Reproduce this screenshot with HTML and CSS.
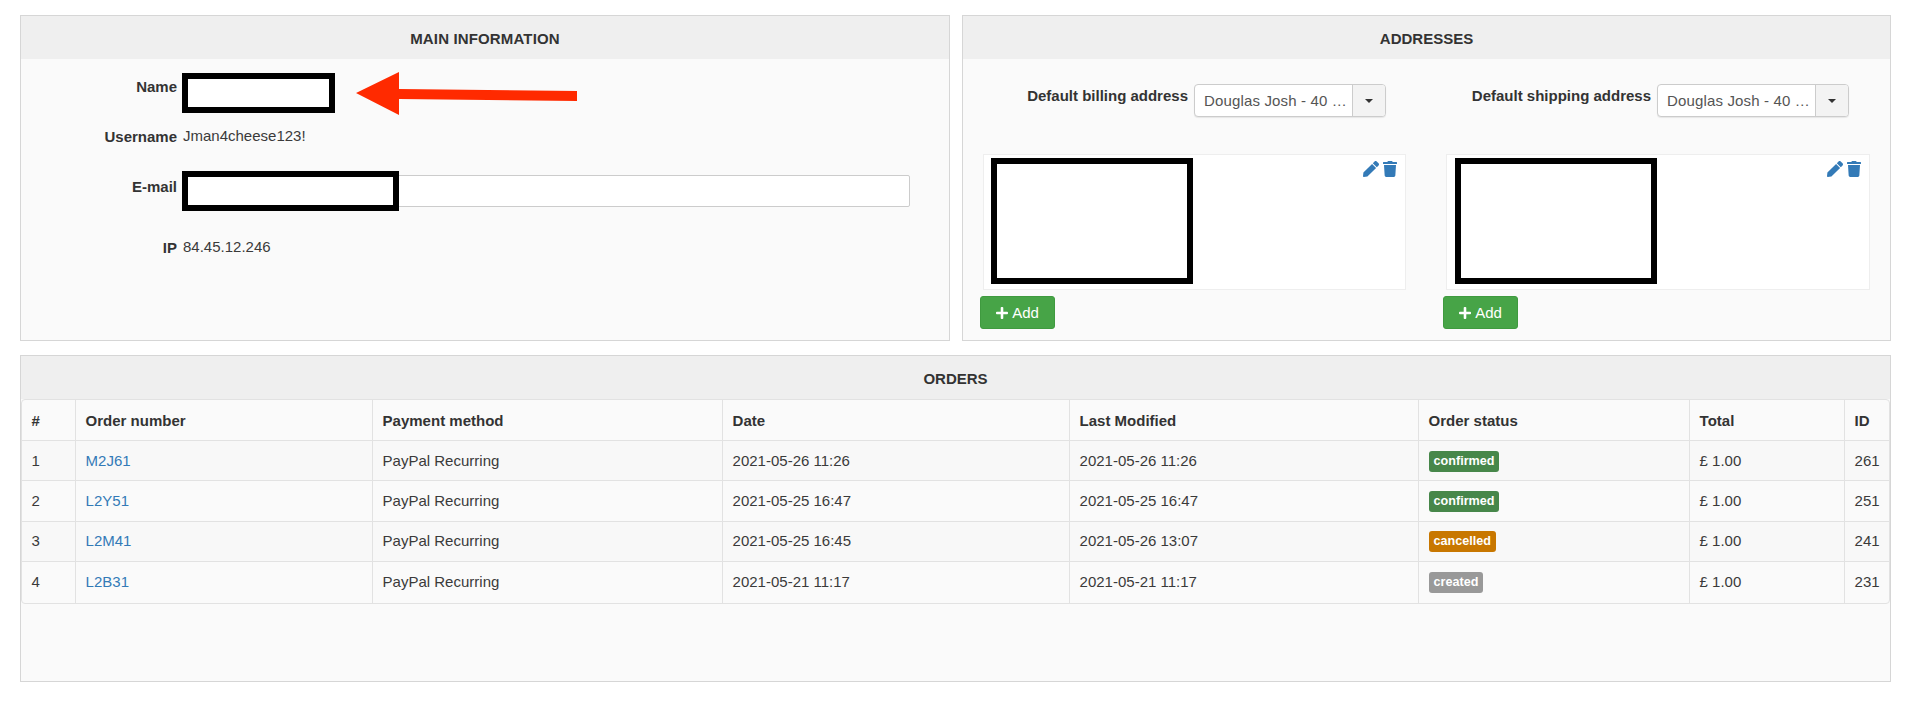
FILE: index.html
```html
<!DOCTYPE html>
<html lang="en">
<head>
<meta charset="utf-8">
<title>Customer</title>
<link rel="stylesheet" href="styles.css">
</head>
<body>
<main class="page">
  <div class="top-row">
    <section class="panel panel-main">
      <h2 class="panel-title">MAIN INFORMATION</h2>
      <div class="main-body">
        <div class="field field-name"><span class="label">Name</span><span class="redact redact-name"></span></div>
        <div class="field field-user"><span class="label">Username</span><span class="value">Jman4cheese123!</span></div>
        <div class="field field-mail"><span class="label">E-mail</span><div class="mail-input"><span class="redact redact-mail"></span></div></div>
        <div class="field field-ip"><span class="label">IP</span><span class="value">84.45.12.246</span></div>
      </div>
      <svg class="arrow" viewBox="0 0 221 43" aria-hidden="true"><path d="M0 21 43 0V17L221 19V29L43 27V43Z"/></svg>
    </section>
    <section class="panel panel-addr">
      <h2 class="panel-title">ADDRESSES</h2>
      <div class="addr-body">
        <div class="addr-col">
          <div class="addr-select-row">
            <span class="addr-label">Default billing address</span>
            <div class="select"><span class="select-text">Douglas Josh - 40 …</span><span class="select-caret"><i class="caret"></i></span></div>
          </div>
          <div class="addr-box">
            <span class="redact redact-addr"></span>
            <div class="addr-icons">
              <svg class="ico-pen" viewBox="0 0 512 512"><path d="M290.74 93.24l128.02 128.02-277.99 277.99-114.14 12.6C11.35 513.54-1.56 500.62.14 485.34l12.7-114.22 277.9-277.88zm207.2-19.06l-60.11-60.11c-18.75-18.75-49.16-18.75-67.91 0l-56.55 56.55 128.02 128.02 56.55-56.55c18.75-18.76 18.75-49.16 0-67.91z"/></svg>
              <svg class="ico-trash" viewBox="0 0 448 512"><path d="M432 32H312l-9.4-18.7A24 24 0 0 0 281.1 0H166.8a23.72 23.72 0 0 0-21.4 13.3L136 32H16A16 16 0 0 0 0 48v32a16 16 0 0 0 16 16h416a16 16 0 0 0 16-16V48a16 16 0 0 0-16-16zM53.2 467a48 48 0 0 0 47.9 45h245.8a48 48 0 0 0 47.9-45L416 128H32z"/></svg>
            </div>
          </div>
          <button class="btn-add" type="button"><svg class="ico-plus" viewBox="0 0 448 448"><path d="M416 176H272V32c0-17.67-14.33-32-32-32h-32c-17.67 0-32 14.33-32 32v144H32c-17.67 0-32 14.33-32 32v32c0 17.67 14.33 32 32 32h144v144c0 17.67 14.33 32 32 32h32c17.67 0 32-14.33 32-32V272h144c17.67 0 32-14.33 32-32v-32c0-17.67-14.33-32-32-32z"/></svg>Add</button>
        </div>
        <div class="addr-col">
          <div class="addr-select-row">
            <span class="addr-label">Default shipping address</span>
            <div class="select"><span class="select-text">Douglas Josh - 40 …</span><span class="select-caret"><i class="caret"></i></span></div>
          </div>
          <div class="addr-box">
            <span class="redact redact-addr"></span>
            <div class="addr-icons">
              <svg class="ico-pen" viewBox="0 0 512 512"><path d="M290.74 93.24l128.02 128.02-277.99 277.99-114.14 12.6C11.35 513.54-1.56 500.62.14 485.34l12.7-114.22 277.9-277.88zm207.2-19.06l-60.11-60.11c-18.75-18.75-49.16-18.75-67.91 0l-56.55 56.55 128.02 128.02 56.55-56.55c18.75-18.76 18.75-49.16 0-67.91z"/></svg>
              <svg class="ico-trash" viewBox="0 0 448 512"><path d="M432 32H312l-9.4-18.7A24 24 0 0 0 281.1 0H166.8a23.72 23.72 0 0 0-21.4 13.3L136 32H16A16 16 0 0 0 0 48v32a16 16 0 0 0 16 16h416a16 16 0 0 0 16-16V48a16 16 0 0 0-16-16zM53.2 467a48 48 0 0 0 47.9 45h245.8a48 48 0 0 0 47.9-45L416 128H32z"/></svg>
            </div>
          </div>
          <button class="btn-add" type="button"><svg class="ico-plus" viewBox="0 0 448 448"><path d="M416 176H272V32c0-17.67-14.33-32-32-32h-32c-17.67 0-32 14.33-32 32v144H32c-17.67 0-32 14.33-32 32v32c0 17.67 14.33 32 32 32h144v144c0 17.67 14.33 32 32 32h32c17.67 0 32-14.33 32-32V272h144c17.67 0 32-14.33 32-32v-32c0-17.67-14.33-32-32-32z"/></svg>Add</button>
        </div>
      </div>
    </section>
  </div>
  <section class="panel panel-orders">
    <h2 class="panel-title">ORDERS</h2>
    <table class="orders">
      <thead>
        <tr>
          <th class="c-num">#</th><th class="c-order">Order number</th><th class="c-pay">Payment method</th><th class="c-date">Date</th><th class="c-mod">Last Modified</th><th class="c-status">Order status</th><th class="c-total">Total</th><th class="c-id">ID</th>
        </tr>
      </thead>
      <tbody>
        <tr><td>1</td><td><a href="#">M2J61</a></td><td>PayPal Recurring</td><td>2021-05-26 11:26</td><td>2021-05-26 11:26</td><td><span class="badge badge-ok">confirmed</span></td><td>£ 1.00</td><td>261</td></tr>
        <tr><td>2</td><td><a href="#">L2Y51</a></td><td>PayPal Recurring</td><td>2021-05-25 16:47</td><td>2021-05-25 16:47</td><td><span class="badge badge-ok">confirmed</span></td><td>£ 1.00</td><td>251</td></tr>
        <tr><td>3</td><td><a href="#">L2M41</a></td><td>PayPal Recurring</td><td>2021-05-25 16:45</td><td>2021-05-26 13:07</td><td><span class="badge badge-cancel">cancelled</span></td><td>£ 1.00</td><td>241</td></tr>
        <tr><td>4</td><td><a href="#">L2B31</a></td><td>PayPal Recurring</td><td>2021-05-21 11:17</td><td>2021-05-21 11:17</td><td><span class="badge badge-created">created</span></td><td>£ 1.00</td><td>231</td></tr>
      </tbody>
    </table>
  </section>
</main>
</body>
</html>
```
FILE: styles.css
```css
* { box-sizing: border-box; }
html, body { margin: 0; background: #fff; }
body { font: 15px/20px "Liberation Sans", Arial, sans-serif; color: #3a3a3a; }
.page { padding: 15px 29px 0 20px; }
.top-row { display: flex; gap: 12px; margin-bottom: 14px; }
.panel { position: relative; background: #fafafa; border: 1px solid #d6d6d6; }
.panel-main { flex: 0 0 930px; height: 326px; }
.panel-addr { flex: 1; height: 326px; }
.panel-orders { height: 327px; }
.panel-title { margin: 0; height: 43px; background: #efefef; font-size: 15px; font-weight: 700; line-height: 45px; text-align: center; color: #333; }
.panel-main .panel-title { letter-spacing: .15px; }

.main-body { padding-top: 14px; }
.field { display: flex; gap: 5px; }
.label { flex: 0 0 156px; text-align: right; font-weight: 700; color: #333; }
.value { margin-left: 1px; }
.field-name { height: 40px; }
.field-name .label { padding-top: 4px; }
.field-user { margin-top: 14px; height: 32px; }
.field-user .value { margin-top: -1px; }
.field-mail { margin-top: 12px; height: 40px; }
.field-mail .label { padding-top: 6px; }
.field-ip { margin-top: 27px; }
.field-ip .value { margin-top: -1px; }
.redact { display: block; background: #fff; border: 6px solid #000; }
.redact-name { width: 153px; height: 40px; }
.mail-input { position: relative; flex: 0 0 728px; height: 32px; margin-top: 4px; background: #fff; border: 1px solid #ccc; border-radius: 2px; }
.redact-mail { position: absolute; left: -1px; top: -5px; width: 217px; height: 40px; }
.arrow { position: absolute; left: 335px; top: 56px; width: 221px; height: 43px; fill: #ff2a00; }

.addr-body { display: flex; }
.addr-col { flex: 1 1 0; min-width: 0; padding: 25px 20px 0; }
.addr-col:first-child { flex: 0 0 463px; }
.addr-select-row { display: flex; justify-content: flex-end; gap: 6px; padding-right: 20px; }
.addr-col + .addr-col .addr-select-row { padding-right: 21px; }
.addr-label { font-weight: 700; padding-top: 2px; color: #333; }
.select { display: flex; width: 192px; height: 33px; background: #fff; border: 1px solid #ccc; border-radius: 4px; box-shadow: 0 1px 1px rgba(0,0,0,.08); overflow: hidden; }
.select-text { flex: 1; padding: 6px 0 0 9px; white-space: nowrap; overflow: hidden; color: #555; letter-spacing: .15px; }
.select-caret { flex: 0 0 33px; display: flex; align-items: center; justify-content: center; background: #f3f3f3; border-left: 1px solid #ccc; }
.caret { width: 0; height: 0; border-left: 4px solid transparent; border-right: 4px solid transparent; border-top: 4px solid #333; }
.addr-box { display: flex; justify-content: space-between; height: 136px; margin-top: 37px; padding: 3px 8px 0 7px; background: #fff; border: 1px solid #eee; }
.addr-col + .addr-col .addr-box { padding-left: 8px; }
.redact-addr { width: 202px; height: 126px; }
.addr-icons { display: flex; gap: 4px; padding-top: 3px; }
.ico-pen { width: 16px; height: 16px; fill: #337ab7; }
.ico-trash { width: 14px; height: 16px; fill: #337ab7; }
.btn-add { display: block; width: 75px; height: 33px; margin: 6px 0 0 -3px; padding: 0; background: #47a447; border: 1px solid #3f9a3f; border-radius: 3px; color: #fff; font: 15px/20px "Liberation Sans", Arial, sans-serif; }
.ico-plus { width: 12px; height: 12px; margin-right: 4px; fill: #fff; vertical-align: -1px; }

.orders { width: 100%; table-layout: fixed; border-collapse: separate; border-spacing: 0; border: 1px solid #e2e2e2; border-radius: 4px; background: #fafafa; }
.orders th, .orders td { padding: 0 0 0 9.6px; text-align: left; vertical-align: middle; border-right: 1px solid #e2e2e2; border-bottom: 1px solid #e2e2e2; }
.orders th { height: 41px; padding-top: 2px; font-weight: 700; color: #333; }
.orders td { height: 40.4px; }
.orders tr > :last-child { border-right: 0; }
.orders tbody tr:last-child td { border-bottom: 0; }
.orders tbody tr:nth-child(odd) { background: #f8f8f8; }
.orders a { color: #337ab7; text-decoration: none; }
.c-num { width: 54px; }
.c-order { width: 297px; }
.c-pay { width: 350px; }
.c-date { width: 347px; }
.c-mod { width: 349px; }
.c-status { width: 271px; }
.c-total { width: 155px; }
.badge { display: inline-block; padding: 0 5px; height: 21px; border-radius: 3px; color: #fff; font-size: 12.6px; font-weight: 700; line-height: 21px; }
.badge-ok { background: #47874a; }
.badge-cancel { background: #c87700; }
.badge-created { background: #999; }
```
